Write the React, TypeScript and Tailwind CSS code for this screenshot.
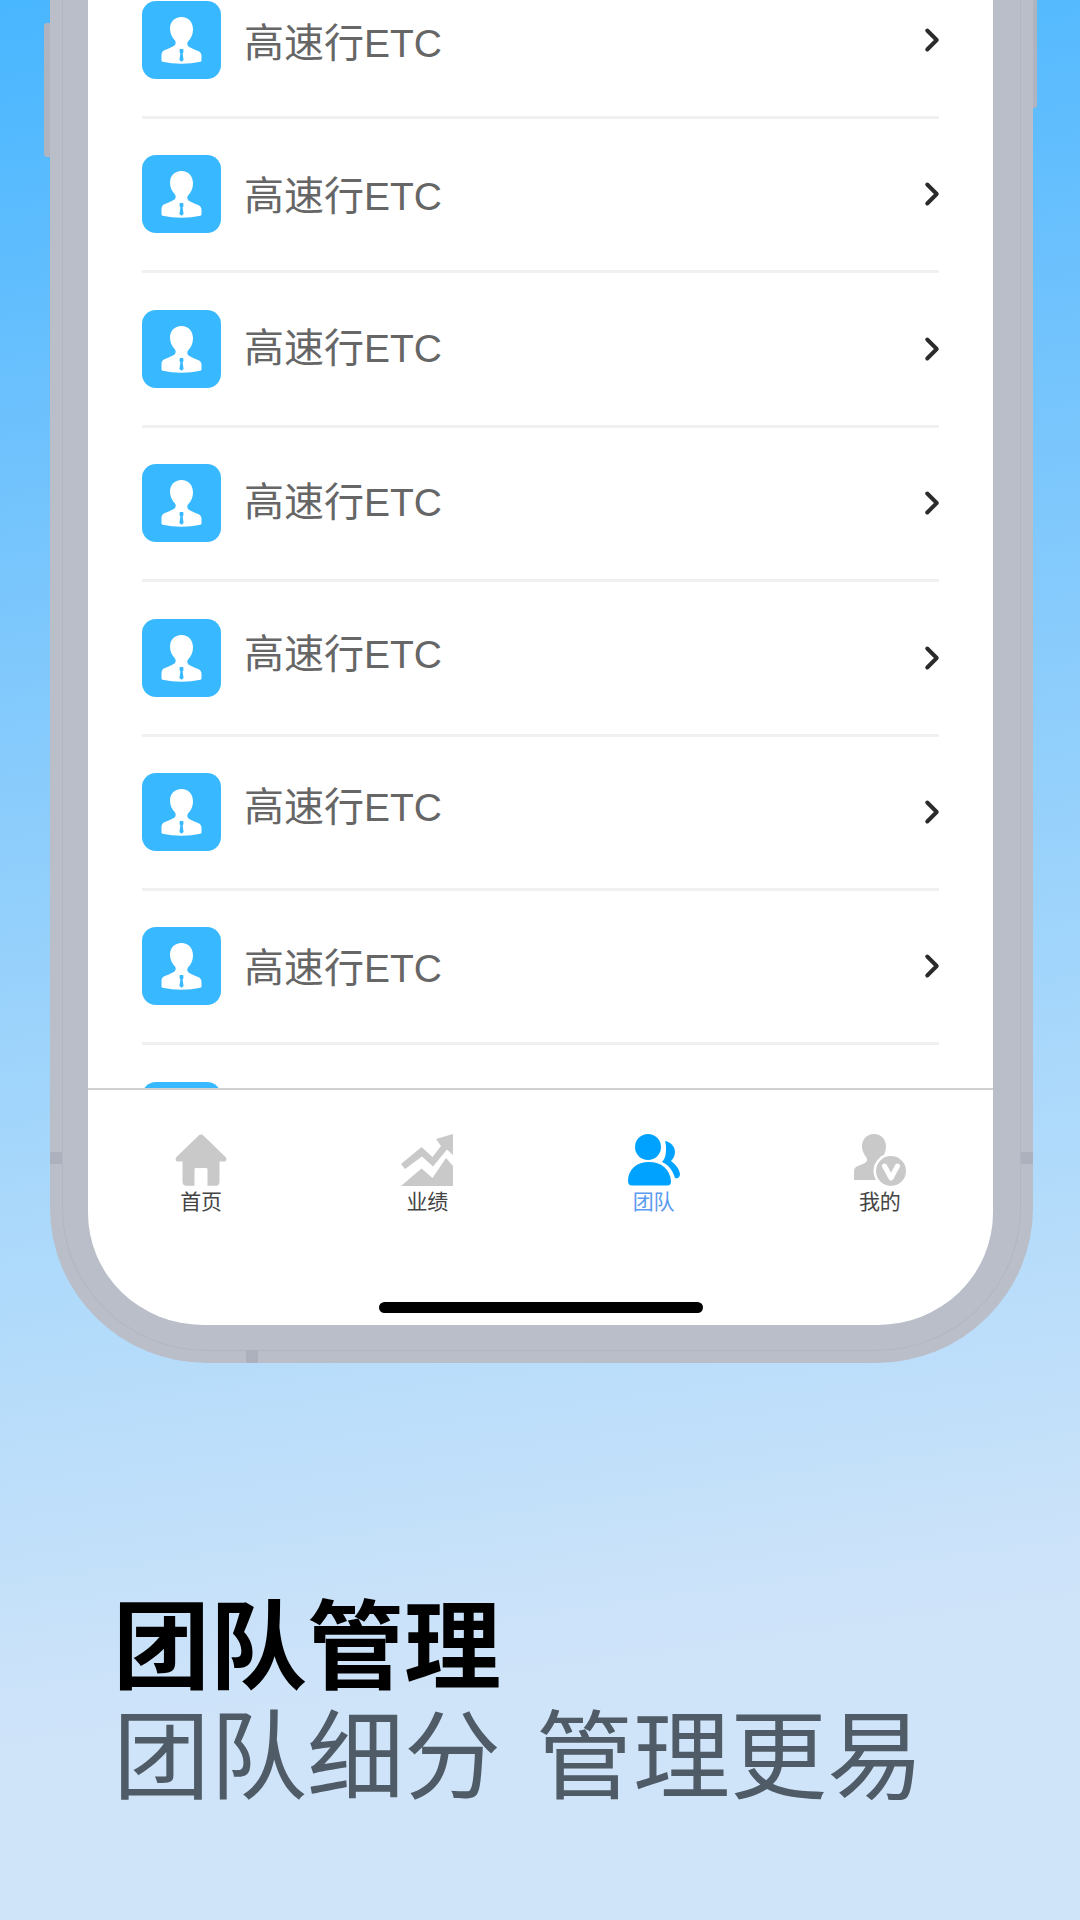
import React from 'react';
import { ChevronRight } from 'lucide-react';

const cjk = "font-['Liberation_Sans','Noto_Sans_CJK_SC',sans-serif]";

// the labels in the shot drift a little against their icons
const rowShifts = [
  'translate-y-0',
  '-translate-y-[1px]',
  '-translate-y-[3px]',
  '-translate-y-[4px]',
  '-translate-y-[6px]',
  '-translate-y-[7px]',
  '-translate-y-[1px]',
];

const Avatar = () => (
  <div className="flex h-[78px] w-[79px] shrink-0 items-center justify-center rounded-[14px] bg-[#38b9ff]">
    <svg viewBox="0 0 79 78" className="h-[78px] w-[79px]">
      <path
        fill="#fff"
        d="M39.500 16c-7 0-11.500 5-11.500 11.500 0 5 2 9 5 12 1 1.500 1 3.500-.5 5-2 1.500-5 2.500-9.500 4.500-2.500 1-3.500 2.500-3.500 5v5.500c0 .7.500 1 1.200 1.200 6 1.300 12 2 18.800 2s12.800-.7 18.800-2c.7-.2 1.200-.5 1.200-1.200V55c0-2.500-1-4-3.500-5-4.500-2-7.500-3-9.500-4.500-1.500-1.500-1.500-3.500-.5-5 3-3 5-7 5-12C51 21 46.500 16 39.500 16z"
      />
      <path fill="#38b9ff" d="M37.800 48h3.400l.3 3-.9 1.500 1 6.500-2.100 1.800-2.100-1.800 1-6.500-.9-1.500z" />
    </svg>
  </div>
);

const Row = ({ shift }: { shift: string }) => (
  <div>
    <div className="flex h-[78px] items-center">
      <Avatar />
      <span className={`ml-[23px] flex-1 pt-[5px] text-[40px] leading-none text-[#666] ${cjk} ${shift}`}>
        高速行<span className="text-[39px]">ETC</span>
      </span>
      <ChevronRight className="mr-[-12px] h-[38px] w-[38px] text-[#2b2b2b]" strokeWidth={2.5} />
    </div>
    <div className="mb-[36.400px] mt-[37px] h-[3px] bg-[#f0f0f0]" />
  </div>
);

const HomeIcon = () => (
  <svg viewBox="0 0 52 52" className="h-[52px] w-[52px]">
    <path
      fill="#c9c9c9"
      d="M26 0.500c1 0 1.800.5 2.600 1.300L50.500 23c1.800 2 .8 4.500-1.800 4.500H44.500V48c0 2.200-1.500 3.700-3.500 3.700h-8.500V35.500c0-1-.6-1.500-1.500-1.500H21c-.9 0-1.500.5-1.500 1.500v16.200H11c-2 0-3.500-1.500-3.500-3.700V27.500H3.300c-2.600 0-3.600-2.500-1.800-4.500L23.400 1.800C24.200 1 25 .5 26 .5z"
    />
  </svg>
);

const ChartIcon = () => (
  <svg viewBox="0 0 52 52" className="h-[52px] w-[52px]">
    <path fill="#c9c9c9" d="M52 0v21l-6-5.500-14 17-11-10L4 35 0 30l20.500-17 11 10L40 12 35 5z" />
    <path fill="#c9c9c9" d="M0 52l20.500-17.500 11 9.500L45 24l7 8v20z" />
  </svg>
);

const TeamIcon = () => (
  <svg viewBox="0 0 52 52" className="h-[52px] w-[52px]">
    <circle cx="20" cy="13" r="13" fill="#00a2ff" />
    <path fill="#00a2ff" d="M0 47C0 35 9 28 21 28s21 7 22 19c.2 3-1 4.500-4 4.500H4C1.500 51.500 0 50 0 47z" />
    <path fill="#00a2ff" d="M37 7C43 8 47 13 47 18C47 22 45 25 43 27C47 30 51 34 52 40C52 43 50 45 47 44C45 37 41 31 34 28C37 25 38 21 38 16C38 13 38 10 37 7Z" />
  </svg>
);

const MineIcon = () => (
  <svg viewBox="0 0 52 52" className="h-[52px] w-[52px]">
    <path
      fill="#c9c9c9"
      d="M20 0c7 0 12 5 12 12.500 0 5-2 9-4 11.500-1.500 2-.5 3.500 1 4.500 4 3 8 5 8 8 0 4-8 9-12 9.500H1c-.6 0-1-.4-1-1v-8c0-2.500 1.500-4 4-5 3-1.200 7-2.500 8.500-4.500 1-1.500.5-3-.5-4.500-2-2.500-4-6.500-4-10.500C8 5 13 0 20 0z"
    />
    <circle cx="37" cy="37" r="17.500" fill="#fff" />
    <circle cx="37" cy="37" r="15" fill="#c9c9c9" />
    <path fill="none" stroke="#fff" strokeWidth="5" strokeLinecap="round" strokeLinejoin="round" d="M30.500 32l6.500 12 6.500-12" />
  </svg>
);

const tabs = [
  { label: '首页', icon: <HomeIcon />, active: false },
  { label: '业绩', icon: <ChartIcon />, active: false },
  { label: '团队', icon: <TeamIcon />, active: true },
  { label: '我的', icon: <MineIcon />, active: false },
];

export default function App() {
  return (
    <div className="flex h-[1920px] w-[1080px] flex-col overflow-hidden bg-[linear-gradient(172deg,#48b6ff_0%,#6cc1fd_20%,#a9d8fb_58%,#d0e4f9_85%,#d0e4f9_100%)]">
      <div className="relative ml-[50px] h-[1363px] w-[983px] shrink-0 rounded-b-[157px_155px] bg-[#babec9] pb-[38px] pl-[38px] pr-[40px]">
        {/* side buttons */}
        <div className="absolute left-[-6px] top-[23px] h-[134px] w-[6px] rounded-l-[3px] bg-[#b0b4c0]" />
        <div className="absolute right-[-4px] top-0 h-[108px] w-[4px] rounded-br-[3px] bg-[#b0b4c0]" />
        {/* frame seam */}
        <div className="pointer-events-none absolute inset-x-[12px] bottom-[12px] top-0 rounded-b-[145px_143px] border-x border-b border-[#b2b6c2]" />
        <div className="absolute left-0 top-[1152px] h-[12px] w-[12px] bg-[#adb1bd]" />
        <div className="absolute right-0 top-[1152px] h-[12px] w-[12px] bg-[#adb1bd]" />
        <div className="absolute bottom-0 left-[196px] h-[13px] w-[12px] bg-[#adb1bd]" />

        <div className="relative flex h-[1325px] flex-col overflow-hidden rounded-b-[115px_112px] bg-white">
          <div className="h-[1090px] shrink-0 overflow-hidden border-b-2 border-[#d0d0d0] px-[54px] pt-[1px]">
            {rowShifts.map((shift, i) => (
              <Row key={i} shift={shift} />
            ))}
            <Avatar />
          </div>
          <div className="grid grid-cols-4 pt-[44px]">
            {tabs.map((t) => (
              <div key={t.label} className="flex flex-col items-center">
                {t.icon}
                <span className={`mt-[3px] text-[21px] leading-[26px] ${t.active ? 'text-[#5b9bf0]' : 'text-[#444]'} ${cjk}`}>
                  {t.label}
                </span>
              </div>
            ))}
          </div>
          <div className="absolute bottom-[12px] left-[291px] h-[11px] w-[324px] rounded-full bg-black" />
        </div>
      </div>

      <div className={`pl-[113px] pt-[230px] text-[97px] leading-[110px] ${cjk}`}>
        <div className="font-bold text-black">团队管理</div>
        <div className="text-[#4f5b67] [word-spacing:8px]">团队细分 管理更易</div>
      </div>
    </div>
  );
}
